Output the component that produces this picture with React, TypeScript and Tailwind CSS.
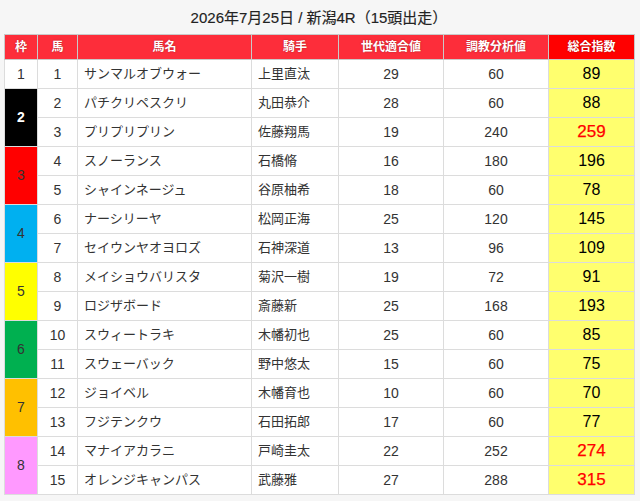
import React from "react";

type Row = {
  waku: number;
  no: number;
  name: string;
  jockey: string;
  gen: number;
  train: number;
  total: number;
};

const rows: Row[] = [
  { waku: 1, no: 1, name: "サンマルオブウォー", jockey: "上里直汰", gen: 29, train: 60, total: 89 },
  { waku: 2, no: 2, name: "パチクリペスクリ", jockey: "丸田恭介", gen: 28, train: 60, total: 88 },
  { waku: 2, no: 3, name: "プリプリプリン", jockey: "佐藤翔馬", gen: 19, train: 240, total: 259 },
  { waku: 3, no: 4, name: "スノーランス", jockey: "石橋脩", gen: 16, train: 180, total: 196 },
  { waku: 3, no: 5, name: "シャインネージュ", jockey: "谷原柚希", gen: 18, train: 60, total: 78 },
  { waku: 4, no: 6, name: "ナーシリーヤ", jockey: "松岡正海", gen: 25, train: 120, total: 145 },
  { waku: 4, no: 7, name: "セイウンヤオヨロズ", jockey: "石神深道", gen: 13, train: 96, total: 109 },
  { waku: 5, no: 8, name: "メイショウバリスタ", jockey: "菊沢一樹", gen: 19, train: 72, total: 91 },
  { waku: 5, no: 9, name: "ロジザボード", jockey: "斎藤新", gen: 25, train: 168, total: 193 },
  { waku: 6, no: 10, name: "スウィートラキ", jockey: "木幡初也", gen: 25, train: 60, total: 85 },
  { waku: 6, no: 11, name: "スウェーバック", jockey: "野中悠太", gen: 15, train: 60, total: 75 },
  { waku: 7, no: 12, name: "ジョイベル", jockey: "木幡育也", gen: 10, train: 60, total: 70 },
  { waku: 7, no: 13, name: "フジテンクウ", jockey: "石田拓郎", gen: 17, train: 60, total: 77 },
  { waku: 8, no: 14, name: "マナイアカラニ", jockey: "戸崎圭太", gen: 22, train: 252, total: 274 },
  { waku: 8, no: 15, name: "オレンジキャンパス", jockey: "武藤雅", gen: 27, train: 288, total: 315 },
];

// waku colour classes
const wakuStyle: Record<number, string> = {
  1: "bg-white text-[#333]",
  2: "bg-black !text-white font-bold",
  3: "bg-[#ff0000] text-[#333]",
  4: "bg-[#00b0f0] text-[#333]",
  5: "bg-[#ffff00] text-[#333]",
  6: "bg-[#00b050] text-[#333]",
  7: "bg-[#ffc000] text-[#333]",
  8: "bg-[#ff99ff] text-[#333]",
};

const th =
  "border border-[#c9c9c9] bg-[#fd2d3a] text-white text-[12px] font-bold h-[25px] [text-shadow:0_0_2px_rgba(0,0,0,0.35)]";
const td = "border border-[#dcdcdc] h-[29px] text-[13px] text-[#333]";
const num = "!text-[14px] text-center";

export default function App() {
  const wakuCount = (w: number) => rows.filter((r) => r.waku === w).length;

  return (
    <div
      className="min-h-screen w-[640px] h-[501px] bg-[#f6f6f6] pl-[4px] pr-[6px] pt-[8px]"
      style={{ fontFamily: '"Liberation Sans", "Noto Sans CJK JP", sans-serif' }}
    >
      <h1 className="text-center text-[15px] leading-[20px] text-[#222] mb-[6px] [-webkit-text-stroke:0.15px_#222]">
        2026年7月25日 / 新潟4R（15頭出走）
      </h1>
      <table className="w-[630px] table-fixed border-collapse bg-white">
        <colgroup>
          <col className="w-[33px]" />
          <col className="w-[40px]" />
          <col className="w-[174px]" />
          <col className="w-[87px]" />
          <col className="w-[105px]" />
          <col className="w-[105px]" />
          <col className="w-[86px]" />
        </colgroup>
        <thead>
          <tr>
            <th className={th}>枠</th>
            <th className={th}>馬</th>
            <th className={th}>馬名</th>
            <th className={th}>騎手</th>
            <th className={th}>世代適合値</th>
            <th className={th}>調教分析値</th>
            <th className={`${th} !bg-[#ff0000]`}>総合指数</th>
          </tr>
        </thead>
        <tbody>
          {rows.map((r, i) => {
            const first = i === 0 || rows[i - 1].waku !== r.waku;
            const hot = r.total >= 250;
            return (
              <tr key={r.no}>
                {first && (
                  <td
                    rowSpan={wakuCount(r.waku)}
                    className={`${td} ${num} ${wakuStyle[r.waku]}`}
                  >
                    {r.waku}
                  </td>
                )}
                <td className={`${td} ${num}`}>{r.no}</td>
                <td className={`${td} pl-[6px]`}>{r.name}</td>
                <td className={`${td} pl-[6px]`}>{r.jockey}</td>
                <td className={`${td} ${num}`}>{r.gen}</td>
                <td className={`${td} ${num}`}>{r.train}</td>
                <td
                  className={`${td} text-center bg-[#ffff6e] ${
                    hot
                      ? "!text-[#ff0000] !text-[17px] [-webkit-text-stroke:0.25px_#ff0000]"
                      : "!text-black !text-[16px]"
                  }`}
                >
                  {r.total}
                </td>
              </tr>
            );
          })}
        </tbody>
      </table>
    </div>
  );
}
